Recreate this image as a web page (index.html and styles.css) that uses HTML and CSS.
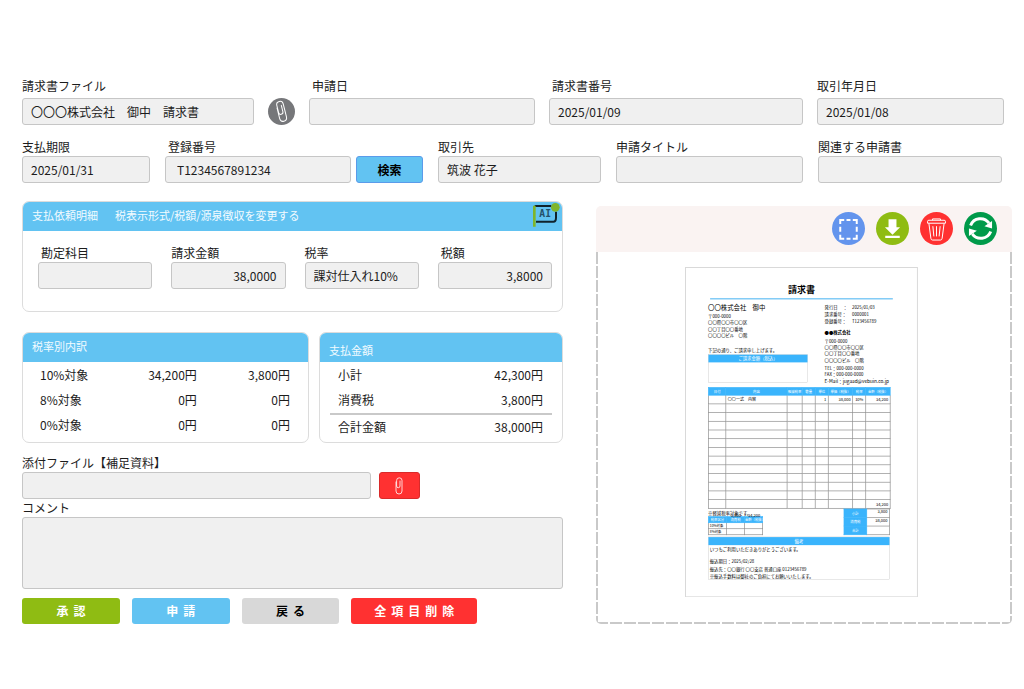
FILE: index.html
```html
<!DOCTYPE html>
<html lang="ja">
<head>
<meta charset="utf-8">
<meta name="viewport" content="width=device-width, initial-scale=1">
<title>請求書</title>
<link rel="stylesheet" href="styles.css">
</head>
<body>
<main class="page">
  <form class="form">
    <div class="row row-invoice">
      <div class="field"><label for="file">請求書ファイル</label><input id="file" type="text" value="〇〇〇株式会社　御中　請求書"></div>
      <button type="button" class="clip-round" aria-label="添付">
        <svg viewBox="0 0 27 27"><g transform="rotate(-14 13.500 13.500)" fill="none" stroke="#fff" stroke-linecap="round"><path d="M10 9v11a3.500 3.500 0 0 0 7 0V6.500a3.300 3.300 0 0 0-6.600 0V14a2.200 2.200 0 0 0 4.400 0V7.500"/></g></svg>
      </button>
      <div class="field inset"><label for="applied">申請日</label><input id="applied" type="text"></div>
      <div class="field inset"><label for="number">請求書番号</label><input id="number" type="text" value="2025/01/09"></div>
      <div class="field"><label for="traded">取引年月日</label><input id="traded" type="text" value="2025/01/08"></div>
    </div>
    <div class="row row-payment">
      <div class="field"><label for="due">支払期限</label><input id="due" type="text" value="2025/01/31"></div>
      <div class="search">
        <div class="field inset"><label for="reg">登録番号</label><input id="reg" type="text" value="T1234567891234"></div>
        <button type="button" class="search-button">検索</button>
      </div>
      <div class="field"><label for="partner">取引先</label><input id="partner" type="text" value="筑波 花子"></div>
      <div class="field"><label for="title">申請タイトル</label><input id="title" type="text"></div>
      <div class="field"><label for="related">関連する申請書</label><input id="related" type="text"></div>
    </div>

    <div class="columns">
      <div class="left">
        <section class="panel">
          <header class="panel-head detail-head">
            <h2>支払依頼明細</h2>
            <a href="#tax">税表示形式/税額/源泉徴収を変更する</a>
            <button type="button" class="ai" aria-label="AI">
              <svg viewBox="0 0 84 72"><path d="M8 9H58M72 26V44Q72 56 64 56H12" fill="none" stroke="#10232c" stroke-width="6"/><path d="M7 8V71" stroke="#7fb52c" stroke-width="8"/><circle cx="70" cy="13" r="13" fill="#7fb52c"/><text x="22" y="43" class="ai-text">AI</text></svg>
            </button>
          </header>
          <div class="detail">
            <div class="field inset"><label for="account">勘定科目</label><input id="account" type="text"></div>
            <div class="field"><label for="amount">請求金額</label><input id="amount" type="text" class="number" value="38,0000"></div>
            <div class="field"><label for="rate">税率</label><input id="rate" type="text" value="課対仕入れ10%"></div>
            <div class="field inset"><label for="tax">税額</label><input id="tax" type="text" class="number" value="3,8000"></div>
          </div>
        </section>

        <div class="summaries">
          <section class="panel">
            <header class="panel-head"><h2>税率別内訳</h2></header>
            <table class="figures rates">
              <tr><th scope="row">10%対象</th><td>34,200円</td><td>3,800円</td></tr>
              <tr><th scope="row">8%対象</th><td>0円</td><td>0円</td></tr>
              <tr><th scope="row">0%対象</th><td>0円</td><td>0円</td></tr>
            </table>
          </section>
          <section class="panel">
            <header class="panel-head low"><h2>支払金額</h2></header>
            <table class="figures totals">
              <tr><th scope="row">小計</th><td>42,300円</td></tr>
              <tr class="levy"><th scope="row">消費税</th><td>3,800円</td></tr>
              <tr class="sum"><th scope="row">合計金額</th><td>38,000円</td></tr>
            </table>
          </section>
        </div>

        <div class="attach">
          <div class="field"><label for="attachment">添付ファイル【補足資料】</label><input id="attachment" type="text"></div>
          <button type="button" class="attach-button" aria-label="ファイルを添付">
            <svg viewBox="0 0 12 20"><path d="M3 6v9a3 3 0 0 0 6 0V4.500a2.700 2.700 0 0 0-5.400 0V10a1.700 1.700 0 0 0 3.400 0V5" fill="none" stroke="#fff" stroke-width=".8" stroke-linecap="round"/></svg>
          </button>
        </div>
        <div class="field"><label for="comment">コメント</label><textarea id="comment"></textarea></div>
        <div class="actions">
          <button type="button" class="approve">承認</button>
          <button type="button" class="apply">申請</button>
          <button type="button" class="back">戻る</button>
          <button type="button" class="clear">全項目削除</button>
        </div>
      </div>

      <section class="preview">
        <header class="tools">
          <button type="button" aria-label="範囲選択"><svg viewBox="0 0 100 100"><circle cx="50" cy="50" r="50" fill="#6394ed"/><g fill="none" stroke="#fff" stroke-width="6"><path d="M25 36V24H37M63 24H75V36M75 69V81H63M37 81H25V69M44 24H56M44 81H56M25 45V60M75 45V60"/></g></svg></button>
          <button type="button" aria-label="ダウンロード"><svg viewBox="0 0 100 100"><circle cx="50" cy="50" r="50" fill="#8fbc13"/><path d="M38 22H62V46H73L50 69L27 46H38ZM28 72H72V79H28Z" fill="#fff"/></svg></button>
          <button type="button" aria-label="削除"><svg viewBox="0 0 100 100"><circle cx="50" cy="50" r="50" fill="#ff3131"/><g fill="none" stroke="#fff" stroke-width="3" stroke-linejoin="round"><path d="M23 28Q23 25 27 25H73Q77 25 77 28V34H23ZM38 25V21H62V25M27 35L33 80Q34 85 38 85H62Q66 85 67 80L73 35M39 43L42 74M50 43V74M61 43L58 74"/></g></svg></button>
          <button type="button" aria-label="更新"><svg viewBox="0 0 100 100"><circle cx="50" cy="50" r="50" fill="#009a4a"/><path d="M20 41A32 32 0 0 1 76 34M81 59A32 32 0 0 1 25 66" fill="none" stroke="#fff" stroke-width="9"/><path d="M85 27V50L62 43ZM15 73V50L39 57Z" fill="#fff"/></svg></button>
        </header>
        <div class="canvas">
          <svg class="sheet" viewBox="0 0 696 987">
            <foreignObject width="696" height="987">
              <article class="doc">
                <h1>請求書</h1>
                <div class="doc-top">
                  <div>
                    <p class="to">〇〇株式会社　御中</p>
                    <p>〒000-0000</p><p>〇〇県〇〇市〇〇区</p><p>〇〇丁目〇〇番地</p><p>〇〇〇〇ビル　〇階</p>
                    <p class="greeting">下記の通り、ご請求申し上げます。</p>
                    <div class="claim"><p>ご請求金額（税込）</p></div>
                  </div>
                  <div class="issuer">
                    <dl>
                      <dt>発行日　 ：</dt><dd>2025/01/03</dd>
                      <dt>請求番号：</dt><dd>0000001</dd>
                      <dt>登録番号：</dt><dd>T123456789</dd>
                    </dl>
                    <p class="issuer-name">●●株式会社</p>
                    <p>〒000-0000</p><p>〇〇県〇〇市〇〇区</p><p>〇〇丁目〇〇番地</p><p>〇〇〇〇ビル　〇階</p>
                    <p class="phone">TEL：000-000-0000</p><p>FAX：000-000-0000</p><p class="mail">E-Mail：jugaad@vebuin.co.jp</p>
                  </div>
                </div>
                <table class="items">
                  <colgroup><col class="c-date"><col class="c-name"><col class="c-mark"><col class="c-s"><col class="c-s"><col class="c-m"><col class="c-s"><col class="c-m"></colgroup>
                  <tr class="items-head"><th>日付</th><th>内容</th><th>軽減税率</th><th>数量</th><th>単位</th><th>単価（税抜）</th><th>税率</th><th>金額（税抜）</th></tr>
                  <tr><td></td><td class="name">〇〇一式　内容</td><td></td><td></td><td>1</td><td>38,000</td><td class="mid">10%</td><td>34,200</td></tr>
                  <tr><td></td><td></td><td></td><td></td><td></td><td></td><td></td><td></td></tr>
                  <tr><td></td><td></td><td></td><td></td><td></td><td></td><td></td><td></td></tr>
                  <tr><td></td><td></td><td></td><td></td><td></td><td></td><td></td><td></td></tr>
                  <tr><td></td><td></td><td></td><td></td><td></td><td></td><td></td><td></td></tr>
                  <tr><td></td><td></td><td></td><td></td><td></td><td></td><td></td><td></td></tr>
                  <tr><td></td><td></td><td></td><td></td><td></td><td></td><td></td><td></td></tr>
                  <tr><td></td><td></td><td></td><td></td><td></td><td></td><td></td><td></td></tr>
                  <tr><td></td><td></td><td></td><td></td><td></td><td></td><td></td><td></td></tr>
                  <tr><td></td><td></td><td></td><td></td><td></td><td></td><td></td><td></td></tr>
                  <tr><td></td><td></td><td></td><td></td><td></td><td></td><td></td><td></td></tr>
                  <tr><td></td><td></td><td></td><td></td><td></td><td></td><td></td><td></td></tr>
                  <tr><td></td><td></td><td></td><td></td><td></td><td></td><td></td><td>34,200</td></tr>
                </table>
                <div class="doc-sums">
                  <div class="reduced">
                    <p>※軽減税率対象です。</p>
                    <div class="over"><span>3,800</span><span>34,200</span></div>
                    <table class="by-rate">
                      <tr><th>税率区分</th><th>消費税</th><th>金額（税抜）</th></tr>
                      <tr><td>10%対象</td><td></td><td></td></tr>
                      <tr><td>8%対象</td><td></td><td></td></tr>
                    </table>
                  </div>
                  <table class="grand">
                    <tr><th>小計</th><td>3,800</td></tr>
                    <tr><th>消費税</th><td>38,000</td></tr>
                    <tr><th>合計</th><td></td></tr>
                  </table>
                </div>
                <section class="remarks">
                  <h3>備考</h3>
                  <p>いつもご利用いただきありがとうございます。</p>
                  <p class="gap">振込期日：2025/02/28</p>
                  <p>振込先：〇〇銀行 〇〇支店 普通口座 0123456789</p>
                  <p>※振込手数料は御社のご負担にてお願いいたします。</p>
                </section>
              </article>
            </foreignObject>
          </svg>
        </div>
      </section>
    </div>
  </form>
</main>
</body>
</html>
```
FILE: styles.css
```css
* { box-sizing: border-box; }
body {
  margin: 0;
  background: #fff;
  color: #1c1c1c;
  font: 12px/18px "Noto Sans CJK JP", sans-serif;
}
h1, h2, h3, p, dl, dd { margin: 0; font-weight: 400; }
button { border: 0; padding: 0; font: inherit; color: inherit; cursor: pointer; }
svg { display: block; }

.page { padding: 77px 12px 40px 22px; }
.row { display: grid; align-items: end; }
.row-invoice {
  grid-template-columns: 232fr 27px 226fr 254fr 187fr;
  gap: 14px;
  padding-right: 8px;
}
.row-payment {
  grid-template-columns: 128fr 258fr 163fr 187fr 184fr;
  gap: 15px;
  padding-right: 10px;
  margin-top: 13px;
}
.row-invoice .field { gap: 3px; }

.field { display: flex; flex-direction: column; min-width: 0; }
.inset label { padding-left: 3px; }
input, textarea {
  width: 100%;
  height: 27px;
  margin: 0;
  padding: 0 8px;
  border: 1px solid #c6c6c6;
  border-radius: 3px;
  background: #f0f0f0;
  color: inherit;
  font: inherit;
}
textarea { display: block; height: 72px; resize: none; }
.number { text-align: right; }

.clip-round { width: 27px; height: 27px; border-radius: 50%; background: #76777a; }
.search { display: grid; grid-template-columns: 1fr 67px; gap: 5px; align-items: end; }
.search input { padding-left: 11px; }
.search-button {
  height: 27px;
  border: 1px solid #5b9bea;
  border-radius: 3px;
  background: #62c3f2;
  color: #000;
  font-weight: 700;
}

.columns {
  display: grid;
  grid-template-columns: 541fr 416fr;
  gap: 33px;
  align-items: start;
  margin-top: 18px;
}
.panel { border: 1px solid #dcdcdc; border-radius: 7px; overflow: hidden; }
.panel-head {
  display: flex;
  align-items: center;
  height: 30px;
  margin: -1px -1px 0;
  padding: 0 10px 2px;
  background: #62c3f2;
  color: #f3fbff;
  font-size: 11px;
}
.panel-head h2 { font-size: 11px; }
.panel-head a { color: inherit; text-decoration: none; }
.detail-head { gap: 17px; padding-right: 3px; }
.low { padding-top: 5px; padding-bottom: 0; }
.ai { width: 28px; height: 24px; margin-left: auto; background: none; }
.ai-text { font: 700 29px "DejaVu Sans Mono", monospace; fill: #24506a; }
.detail {
  display: grid;
  grid-template-columns: repeat(4, 1fr);
  gap: 19px;
  padding: 13px 10px 22px 15px;
}

.summaries {
  display: grid;
  grid-template-columns: 287fr 244fr;
  gap: 10px;
  margin-top: 20px;
}
.figures { width: 100%; border-collapse: collapse; table-layout: fixed; }
.figures th, .figures td { height: 25px; padding: 0; font-weight: 400; text-align: right; }
.figures th { text-align: left; }
.rates { margin-bottom: 5px; }
.rates th { width: 30%; padding-left: 17px; }
.rates td:nth-child(2) { width: 31%; }
.rates td:last-child { padding-right: 18px; }
.totals { width: auto; min-width: calc(100% - 20px); margin: 0 10px 4px; }
.totals th { padding-left: 8px; }
.totals td { padding-right: 9px; }
.levy th, .levy td { height: 27px; }
.sum th, .sum td { height: 24px; border-top: 2px solid #c9c9c9; }

.attach {
  display: grid;
  grid-template-columns: 348fr 41px 135fr;
  gap: 8px;
  align-items: end;
  margin-top: 11px;
}
.attach-button {
  display: grid;
  place-items: center;
  height: 27px;
  border: 1px solid #d92a2a;
  border-radius: 3px;
  background: #ff3131;
}
.attach-button svg { width: 12px; height: 20px; }
.actions {
  display: grid;
  grid-template-columns: 98fr 98fr 98fr 126fr 74fr;
  gap: 12px;
  margin-top: 9px;
}
.actions button { height: 26px; padding-left: 5px; border-radius: 3px; color: #fff; font-weight: 700; letter-spacing: 5px; }
.actions .approve { background: #8fbc13; }
.actions .apply { background: #62c3f2; }
.actions .back { background: #d8d8d8; color: #000; }
.actions .clear { background: #ff3131; }

.preview { margin-top: 5px; }
.tools {
  display: flex;
  justify-content: flex-end;
  align-items: center;
  gap: 11px;
  height: 46px;
  padding: 0 15px 2px;
  border-radius: 5px 5px 0 0;
  background: #faf3f2;
}
.tools button { width: 33px; height: 33px; border-radius: 50%; background: none; }
.canvas {
  padding: 15px 0 27px;
  border-radius: 0 0 5px 5px;
  background:
    repeating-linear-gradient(#c9c9c9 0 12px, transparent 12px 14px) left / 2px 100% no-repeat,
    repeating-linear-gradient(#c9c9c9 0 12px, transparent 12px 14px) right / 2px 100% no-repeat,
    repeating-linear-gradient(90deg, #c9c9c9 0 12px, transparent 12px 14px) bottom / 100% 2px no-repeat;
}
.sheet { width: 56%; margin-left: 89px; }

/* The document is laid out at 696 units wide and scaled down by the viewBox. */
.doc {
  height: 987px;
  padding: 48px 81px 0 66px;
  border: 3px solid #d9d9d9;
  background: #fff;
  color: #000;
  font-size: 13px;
  line-height: 19px;
  white-space: nowrap;
}
.doc h1 {
  margin: 0 -9px 0 6px;
  padding-bottom: 10px;
  border-bottom: 4px solid #74c5f5;
  font-size: 27px;
  font-weight: 700;
  line-height: 32px;
  text-align: center;
}
.doc-top { display: grid; grid-template-columns: 298px 1fr; gap: 50px; }
.doc .to { padding: 12px 0 6px; font-size: 19px; line-height: 22px; }
.greeting { padding: 25px 0 4px; }
.claim { height: 84px; border: 1px solid #b9b9b9; }
.claim p { background: #3ab4fc; color: #fff; line-height: 23px; text-align: center; }
.issuer dl { display: grid; grid-template-columns: 82px 1fr; padding-top: 11px; line-height: 21px; }
.issuer-name { padding: 13px 0 8px; font-weight: 700; }
.phone { padding-top: 6px; }
.mail { font-size: 14px; }
.doc table { border-collapse: collapse; table-layout: fixed; }
.doc th, .doc td { padding: 0 5px; border: 2px solid #8b8b8b; text-align: right; font-size: 12px; line-height: 12px; }
.doc th { padding: 0; border-color: #3ab4fc; background: #3ab4fc; color: #fff; font-size: 10px; font-weight: 400; text-align: center; }
.items { width: 100%; margin-top: 9px; }
.items tr { height: 26px; }
.items .items-head { height: 23px; }
.c-date { width: 52px; }
.c-name { width: 183px; }
.c-mark { width: 45px; }
.c-s { width: 39px; }
.c-m { width: 73px; }
.doc .name { text-align: left; }
.doc .mid { padding: 0; text-align: center; }
.doc-sums { display: flex; justify-content: space-between; }
.reduced { padding-top: 3px; }
.over { display: grid; grid-template-columns: 98px 58px; margin: -12px 0 -6px; text-align: right; font-size: 12px; position: relative; }
.by-rate { width: 164px; }
.by-rate tr { height: 18px; }
.doc .by-rate td { padding: 0 3px; font-size: 10px; text-align: left; }
.grand { width: 138px; }
.grand tr { height: 25px; }
.doc .grand td { vertical-align: top; }
.remarks { height: 128px; margin-top: 5px; border: 1px solid #b9b9b9; }
.remarks h3 { margin-bottom: 2px; background: #3ab4fc; color: #fff; font-size: 13px; line-height: 24px; text-align: center; }
.remarks p { padding-left: 4px; line-height: 22px; }
.remarks .gap { margin-top: 14px; }
```
